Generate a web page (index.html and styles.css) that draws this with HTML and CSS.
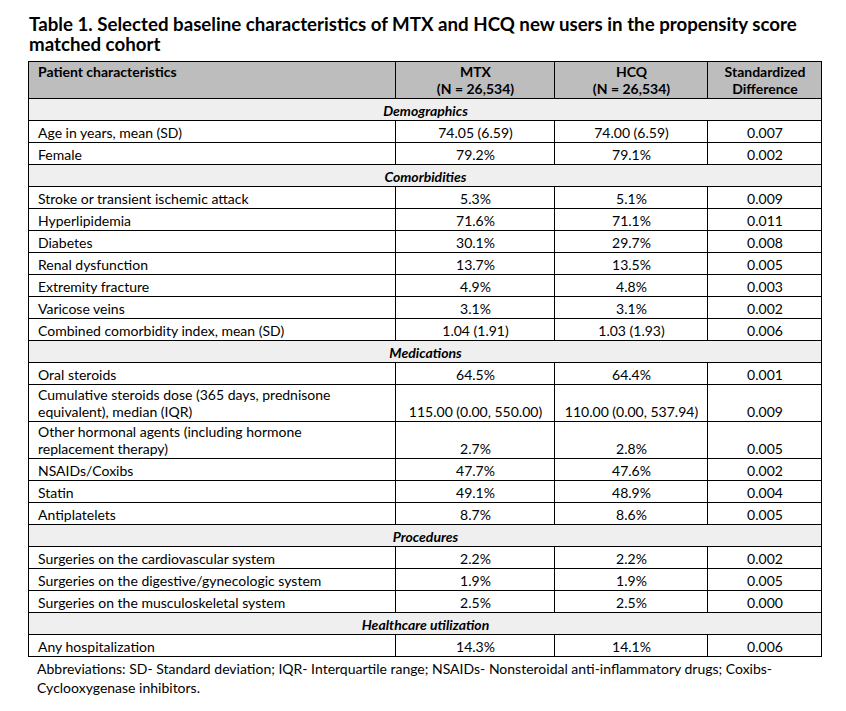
FILE: index.html
```html
<!DOCTYPE html>
<html>
<head>
<meta charset="utf-8">
<link rel="stylesheet" href="styles.css">
</head>
<body>
<div class="page">
<h1 class="title">Table 1. Selected baseline characteristics of MTX and HCQ new users in the propensity score matched cohort</h1>
<table class="tbl">
<colgroup>
<col class="c1"><col class="c2"><col class="c3"><col class="c4">
</colgroup>
<thead>
<tr class="head two">
<th class="lbl">Patient characteristics</th>
<th>MTX<br>(N = 26,534)</th>
<th>HCQ<br>(N = 26,534)</th>
<th>Standardized<br>Difference</th>
</tr>
</thead>
<tbody>
<tr class="sec"><td colspan="4">Demographics</td></tr>
<tr><td>Age in years, mean (SD)</td><td>74.05 (6.59)</td><td>74.00 (6.59)</td><td>0.007</td></tr>
<tr><td>Female</td><td>79.2%</td><td>79.1%</td><td>0.002</td></tr>
<tr class="sec"><td colspan="4">Comorbidities</td></tr>
<tr><td>Stroke or transient ischemic attack</td><td>5.3%</td><td>5.1%</td><td>0.009</td></tr>
<tr><td>Hyperlipidemia</td><td>71.6%</td><td>71.1%</td><td>0.011</td></tr>
<tr><td>Diabetes</td><td>30.1%</td><td>29.7%</td><td>0.008</td></tr>
<tr><td>Renal dysfunction</td><td>13.7%</td><td>13.5%</td><td>0.005</td></tr>
<tr><td>Extremity fracture</td><td>4.9%</td><td>4.8%</td><td>0.003</td></tr>
<tr><td>Varicose veins</td><td>3.1%</td><td>3.1%</td><td>0.002</td></tr>
<tr><td>Combined comorbidity index, mean (SD)</td><td>1.04 (1.91)</td><td>1.03 (1.93)</td><td>0.006</td></tr>
<tr class="sec"><td colspan="4">Medications</td></tr>
<tr><td>Oral steroids</td><td>64.5%</td><td>64.4%</td><td>0.001</td></tr>
<tr class="two"><td>Cumulative steroids dose (365 days, prednisone<br>equivalent), median (IQR)</td><td>115.00 (0.00, 550.00)</td><td>110.00 (0.00, 537.94)</td><td>0.009</td></tr>
<tr class="two"><td>Other hormonal agents (including hormone<br>replacement therapy)</td><td>2.7%</td><td>2.8%</td><td>0.005</td></tr>
<tr><td>NSAIDs/Coxibs</td><td>47.7%</td><td>47.6%</td><td>0.002</td></tr>
<tr><td>Statin</td><td>49.1%</td><td>48.9%</td><td>0.004</td></tr>
<tr><td>Antiplatelets</td><td>8.7%</td><td>8.6%</td><td>0.005</td></tr>
<tr class="sec"><td colspan="4">Procedures</td></tr>
<tr><td>Surgeries on the cardiovascular system</td><td>2.2%</td><td>2.2%</td><td>0.002</td></tr>
<tr><td>Surgeries on the digestive/gynecologic system</td><td>1.9%</td><td>1.9%</td><td>0.005</td></tr>
<tr><td>Surgeries on the musculoskeletal system</td><td>2.5%</td><td>2.5%</td><td>0.000</td></tr>
<tr class="sec"><td colspan="4">Healthcare utilization</td></tr>
<tr><td>Any hospitalization</td><td>14.3%</td><td>14.1%</td><td>0.006</td></tr>
</tbody>
</table>
<p class="note">Abbreviations: SD- Standard deviation; IQR- Interquartile range; NSAIDs- Nonsteroidal anti-inflammatory drugs; Coxibs-<br>Cyclooxygenase inhibitors.</p>
</div>
</body>
</html>
```
FILE: styles.css
```css
html, body {
  margin: 0;
  padding: 0;
  background: #ffffff;
}
body {
  font-family: "Lato", "Liberation Sans", sans-serif;
  color: #000000;
}
.page {
  padding: 14px 20px 0 28px;
}
.title {
  margin: 0 0 7px 1px;
  font-size: 18.7px;
  line-height: 20px;
  font-weight: 700;
  width: 792px;
}
.tbl {
  border-collapse: collapse;
  width: 793px;
  font-size: 14px;
  table-layout: fixed;
}
.c1 { width: 367px; }
.c2 { width: 159px; }
.c3 { width: 153px; }
.c4 { width: 114px; }
.tbl th, .tbl td {
  border: 1px solid #000000;
  padding: 3px 8px 1px 9px;
  line-height: 17px;
  text-align: center;
  vertical-align: bottom;
}
.tbl .two th, .tbl .two td {
  line-height: 16.5px;
  padding-top: 2px;
}
.tbl td:first-child {
  text-align: left;
}
.head th {
  background: #bdbdbd;
  font-weight: 700;
  vertical-align: top;
}
.head th.lbl {
  text-align: left;
}
.sec td {
  background: #efefef;
  font-weight: 700;
  font-style: italic;
}
.tbl .sec td:first-child {
  text-align: center;
}
.note {
  margin: 2px 0 0 9px;
  font-size: 14px;
  line-height: 19px;
}
```
